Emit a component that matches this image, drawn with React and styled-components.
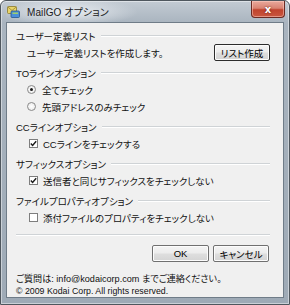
import React from 'react';
import styled, { createGlobalStyle } from 'styled-components';

const Global = createGlobalStyle`
  html, body { margin: 0; padding: 0; background: #ffffff; }
  body { font-family: "Liberation Sans", "Noto Sans CJK JP", sans-serif; }
  * { box-sizing: border-box; }
`;

const Window = styled.div`
  width: 290px;
  height: 305px;
  display: flex;
  flex-direction: column;
  border: 1px solid #4f575e;
  border-radius: 6px 6px 0 0;
  background: linear-gradient(180deg, #c3cbd3 0px, #a9b4bf 22px, #9eaab6 100%);
  box-shadow: inset 0 0 0 1px rgba(255, 255, 255, 0.45);
  padding: 0 5px 6px 5px;
`;

const TitleBar = styled.div`
  height: 22px;
  display: flex;
  align-items: center;
  position: relative;
  background: radial-gradient(ellipse 70px 14px at 62px 11px, rgba(236, 240, 244, 0.95), rgba(236, 240, 244, 0) 100%);
`;

const AppIcon = styled.svg`
  width: 13px;
  height: 13px;
  margin-left: 1px;
  flex: none;
`;

const TitleText = styled.span`
  margin-left: 7px;
  font-size: 10px;
  color: #1b1b1b;
  letter-spacing: 0.1px;
  font-feature-settings: "palt";
`;

const CloseButton = styled.div`
  position: absolute;
  right: -1px;
  top: 0;
  width: 34px;
  height: 17px;
  border: 1px solid #6b2a22;
  border-top: none;
  border-radius: 0 0 4px 4px;
  background: linear-gradient(180deg, #e9a99c 0%, #d98372 45%, #c0432d 55%, #c9573f 100%);
  box-shadow: inset 0 0 0 1px rgba(255, 210, 200, 0.5);
  display: flex;
  align-items: center;
  justify-content: center;
  color: #ffffff;
  font-family: "DejaVu Sans", sans-serif;
  font-weight: bold;
  font-size: 10px;
  text-shadow: 0 0 2px #5a1a10;
`;

const Client = styled.div`
  flex: 1;
  background: #f0f0f0;
  border: 1px solid #6f7c88;
  padding: 4px 13px 0 9px;
  display: flex;
  flex-direction: column;
  color: #111;
  font-size: 9.5px;
  font-feature-settings: "palt";
`;

const Section = styled.div`
  display: flex;
  flex-direction: column;
  margin-top: ${p => p.$gap || 0}px;
`;

const Header = styled.div`
  height: 17px;
  display: flex;
  align-items: center;
  gap: 5px;
  white-space: nowrap;
  &::after {
    content: "";
    flex: 1;
    height: 1px;
    background: #cfd3d6;
    box-shadow: 0 1px 0 #ffffff;
  }
`;

const Row = styled.div`
  height: 17px;
  display: flex;
  align-items: center;
  padding-left: ${p => p.$indent || 11}px;
  white-space: nowrap;
`;

const Spacer = styled.div`
  flex: 1;
`;

const Button = styled.div`
  width: ${p => p.$w}px;
  height: 17px;
  display: flex;
  align-items: center;
  justify-content: center;
  border: 1px solid ${p => (p.$default ? '#2c2c2c' : '#707070')};
  border-radius: 2px;
  background: linear-gradient(180deg, #f4f4f4 0%, #ececec 48%, #dedede 52%, #d4d4d4 100%);
  box-shadow: inset 0 0 0 1px #fcfcfc;
  font-size: 9.5px;
  color: #000;
`;

const RadioMark = styled.span`
  width: 9px;
  height: 9px;
  border-radius: 50%;
  border: 1px solid #8a8a8a;
  background: radial-gradient(circle, #ffffff 0%, #e6e6e6 100%);
  margin-right: 6px;
  display: flex;
  align-items: center;
  justify-content: center;
  flex: none;
  &::after {
    content: "";
    width: 3px;
    height: 3px;
    border-radius: 50%;
    background: ${p => (p.$on ? '#1b1b1b' : 'transparent')};
  }
`;

const CheckBox = styled.span`
  width: 9px;
  height: 9px;
  border: 1px solid #7e7e7e;
  background: #ffffff;
  margin-left: 2px;
  margin-right: 5px;
  flex: none;
  display: flex;
  align-items: center;
  justify-content: center;
`;

const Separator = styled.div`
  height: 1px;
  background: #cfd3d6;
  box-shadow: 0 1px 0 #ffffff;
  margin-top: 8px;
`;

const ButtonRow = styled.div`
  display: flex;
  justify-content: flex-end;
  gap: 4px;
  margin-top: 10px;
  padding-right: 1px;
`;

const Footer = styled.div`
  margin-top: 9px;
  display: flex;
  flex-direction: column;
`;

const FooterLine = styled.div`
  height: 13px;
  display: flex;
  align-items: center;
  white-space: nowrap;
  font-size: ${p => p.$size || 9.5}px;
`;

const Check = () => (
  <svg width="7" height="7" viewBox="0 0 7 7">
    <path d="M0.8 3.6 L2.6 5.5 L6.2 1.2" fill="none" stroke="#1a1a1a" strokeWidth="1.4" />
  </svg>
);

const Radio = ({ on, children }) => (
  <Row $indent={11}>
    <RadioMark $on={on} />
    {children}
  </Row>
);

const CheckRow = ({ on, children }) => (
  <Row $indent={11}>
    <CheckBox>{on && <Check />}</CheckBox>
    {children}
  </Row>
);

export default function App() {
  return (
    <>
      <Global />
      <Window>
        <TitleBar>
          <AppIcon viewBox="0 0 13 13">
            <rect x="0.5" y="1.5" width="9" height="7" rx="1" fill="#e9d46a" stroke="#8c7a2a" strokeWidth="0.8" />
            <path d="M0.8 2 L5 5.5 L9.2 2" fill="none" stroke="#8c7a2a" strokeWidth="0.7" />
            <rect x="4" y="6" width="8.5" height="6.5" rx="1" fill="#4c8fd8" stroke="#24558f" strokeWidth="0.8" />
            <rect x="5.5" y="7.5" width="5.5" height="1.5" fill="#9fd06a" />
          </AppIcon>
          <TitleText>MailGO オプション</TitleText>
          <CloseButton>x</CloseButton>
        </TitleBar>
        <Client>
          <Section>
            <Header>ユーザー定義リスト</Header>
            <Row $indent={11}>
              ユーザー定義リストを作成します。
              <Spacer />
              <Button $w={56} $default>リスト作成</Button>
            </Row>
          </Section>
          <Section $gap={3}>
            <Header>TOラインオプション</Header>
            <Radio on>全てチェック</Radio>
            <Radio>先頭アドレスのみチェック</Radio>
          </Section>
          <Section $gap={3}>
            <Header>CCラインオプション</Header>
            <CheckRow on>CCラインをチェックする</CheckRow>
          </Section>
          <Section $gap={3}>
            <Header>サフィックスオプション</Header>
            <CheckRow on>送信者と同じサフィックスをチェックしない</CheckRow>
          </Section>
          <Section $gap={3}>
            <Header>ファイルプロパティオプション</Header>
            <CheckRow>添付ファイルのプロパティをチェックしない</CheckRow>
          </Section>
          <Separator />
          <ButtonRow>
            <Button $w={57}>OK</Button>
            <Button $w={56}>キャンセル</Button>
          </ButtonRow>
          <Footer>
            <FooterLine $size={9.1}>ご質問は: info@kodaicorp.com までご連絡ください。</FooterLine>
            <FooterLine $size={8.8}>© 2009 Kodai Corp. All rights reserved.</FooterLine>
          </Footer>
        </Client>
      </Window>
    </>
  );
}
